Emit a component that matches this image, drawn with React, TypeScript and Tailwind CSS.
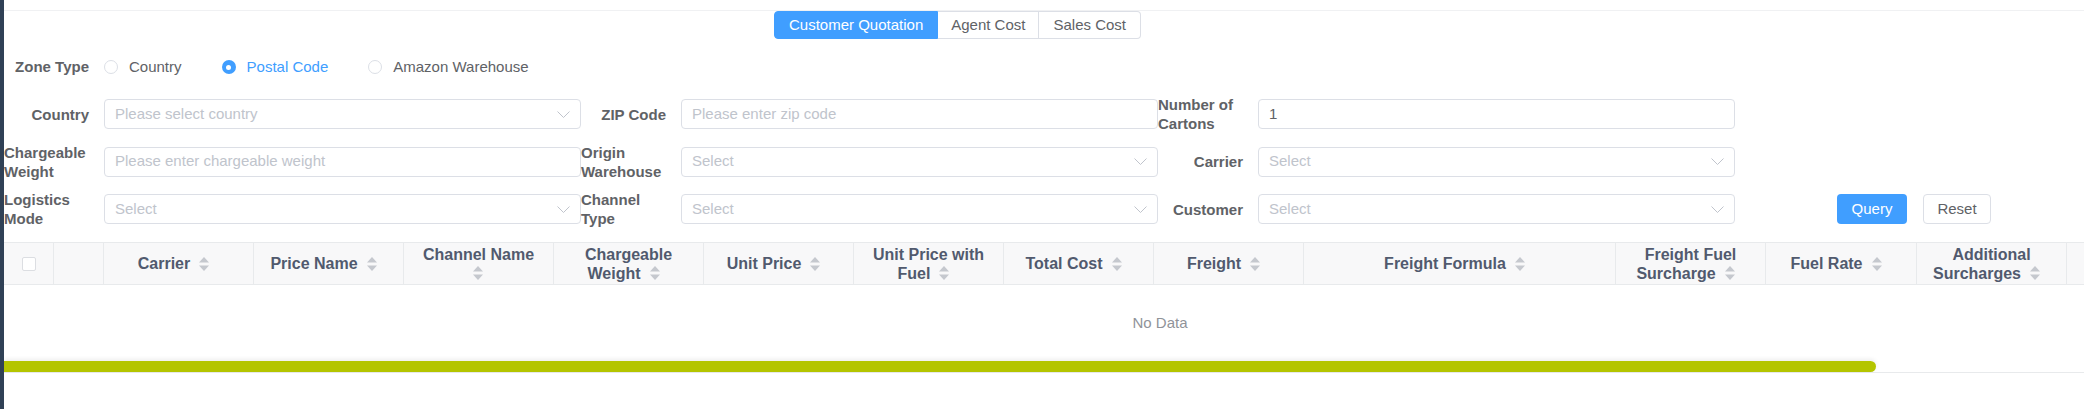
import React from 'react';

// Quotation query page: tabs, zone type radios, filter form and an empty table.

const label = 'text-[#606266]';

function Chevron() {
  return (
    <svg width="13" height="7" viewBox="0 0 13 7" className="shrink-0">
      <polyline points="0.5,0.5 6.5,6.5 12.5,0.5" fill="none" stroke="#c0c4cc" strokeWidth="1" />
    </svg>
  );
}

function SortIcon() {
  return (
    <svg width="12" height="16" viewBox="0 0 12 16" className="ml-[8px] mr-[9px] inline-block align-middle -mt-[2px]">
      <polygon points="6,1 11,6.5 1,6.5" fill="#c5c8ce" />
      <polygon points="1,9.5 11,9.5 6,15" fill="#c5c8ce" />
    </svg>
  );
}

function Radio({ text, checked }: { text: string; checked?: boolean }) {
  return (
    <label className="mr-[40px] flex items-center">
      {checked ? (
        <span className="flex h-[14px] w-[14px] items-center justify-center rounded-full bg-[#409eff]">
          <span className="h-[5px] w-[5px] rounded-full bg-white" />
        </span>
      ) : (
        <span className="h-[14px] w-[14px] rounded-full border border-[#dcdfe6] bg-white" />
      )}
      <span className={`ml-[11px] ${checked ? 'text-[#409eff]' : 'text-[#606266]'}`}>{text}</span>
    </label>
  );
}

function Field({ name, placeholder, value, select }: { name: string; placeholder?: string; value?: string; select?: boolean }) {
  return (
    <div className="flex h-[30px] w-[577px] shrink-0 items-center">
      <div className={`flex w-[100px] shrink-0 justify-end pr-[15px] text-[15px] font-bold leading-[19px] ${label}`}>
        <span className="block">{name}</span>
      </div>
      <div className="flex h-[30px] flex-1 items-center rounded-[4px] border border-[#dcdfe6] bg-white pl-[10px] pr-[10px]">
        <span className={`flex-1 truncate text-[15px] ${value ? 'text-[#606266]' : 'text-[#c0c4cc]'}`}>
          {value ?? placeholder}
        </span>
        {select && <Chevron />}
      </div>
    </div>
  );
}

const columns: { w: number; title?: string; check?: boolean }[] = [
  { w: 50, check: true },
  { w: 50 },
  { w: 150, title: 'Carrier' },
  { w: 150, title: 'Price Name' },
  { w: 150, title: 'Channel Name' },
  { w: 150, title: 'Chargeable Weight' },
  { w: 150, title: 'Unit Price' },
  { w: 150, title: 'Unit Price with Fuel' },
  { w: 150, title: 'Total Cost' },
  { w: 150, title: 'Freight' },
  { w: 312, title: 'Freight Formula' },
  { w: 150, title: 'Freight Fuel Surcharge' },
  { w: 151, title: 'Fuel Rate' },
  { w: 150, title: 'Additional Surcharges' },
  { w: 150 },
  { w: 95 },
];

export default function App() {
  return (
    <div className="flex min-h-screen w-full overflow-hidden bg-white font-['Liberation_Sans',Arial,sans-serif]">
      <div className="w-[4px] shrink-0 bg-[#304156]" />

      <div className="min-w-0 flex-1 overflow-hidden">
        <div className="h-[10px]" />
        <div className="border-t border-[#f0f1f3]">
          {/* price type tabs */}
          <div className="ml-[770px] flex h-[28px] text-[15px]">
            <div className="flex items-center rounded-l-[4px] border border-[#409eff] bg-[#409eff] px-[14px] text-white">
              Customer Quotation
            </div>
            <div className="flex items-center border border-l-0 border-[#dcdfe6] px-[13px] text-[#606266]">Agent Cost</div>
            <div className="flex items-center rounded-r-[4px] border border-l-0 border-[#dcdfe6] px-[14px] text-[#606266]">
              Sales Cost
            </div>
          </div>

          {/* zone type */}
          <div className="mt-[14px] flex h-[28px] items-center text-[15px]">
            <div className={`flex w-[100px] justify-end pr-[15px] font-bold ${label}`}>Zone Type</div>
            <Radio text="Country" />
            <Radio text="Postal Code" checked />
            <Radio text="Amazon Warehouse" />
          </div>

          {/* filters */}
          <div className="mt-[18px] flex flex-col gap-[17.5px]">
            <div className="flex">
              <Field name="Country" placeholder="Please select country" select />
              <Field name="ZIP Code" placeholder="Please enter zip code" />
              <Field name="Number of Cartons" value="1" />
            </div>
            <div className="flex">
              <Field name="Chargeable Weight" placeholder="Please enter chargeable weight" />
              <Field name="Origin Warehouse" placeholder="Select" select />
              <Field name="Carrier" placeholder="Select" select />
            </div>
            <div className="flex">
              <Field name="Logistics Mode" placeholder="Select" select />
              <Field name="Channel Type" placeholder="Select" select />
              <Field name="Customer" placeholder="Select" select />
              <div className="ml-[102px] flex h-[30px] gap-[16px] text-[15px]">
                <button className="h-[30px] w-[70px] rounded-[4px] bg-[#409eff] text-white">Query</button>
                <button className="h-[30px] w-[68px] rounded-[4px] border border-[#dcdfe6] bg-white text-[#606266]">Reset</button>
              </div>
            </div>
          </div>

          {/* result table */}
          <div className="mt-[18px] w-[2312px]">
            <div className="flex h-[43px] border-y border-[#e8eaec] bg-[#f8f8f9] text-[16px] font-bold leading-[19px] text-[#515a6e]">
              {columns.map((c, i) => (
                <div
                  key={i}
                  style={{ width: c.w }}
                  className={`flex shrink-0 items-center justify-center border-r border-[#e8eaec] ${c.title ? 'px-[15px]' : ''}`}
                >
                  {c.check && <span className="h-[14px] w-[14px] rounded-[2px] border border-[#dcdee2] bg-white" />}
                  {c.title && (
                    <div className="w-full text-center">
                      {c.title}
                      <SortIcon />
                    </div>
                  )}
                </div>
              ))}
            </div>
            <div className="flex h-[76px] items-center justify-center text-[15px] text-[#909399]">No Data</div>
          </div>
          <div className="h-[12px] border-b border-[#e8eaec]">
            <div className="h-[11px] w-[1872px] rounded-r-[6px] bg-[#b4c500] shadow-[0_-2px_4px_rgba(0,0,0,0.07)]" />
          </div>
        </div>
      </div>
    </div>
  );
}
